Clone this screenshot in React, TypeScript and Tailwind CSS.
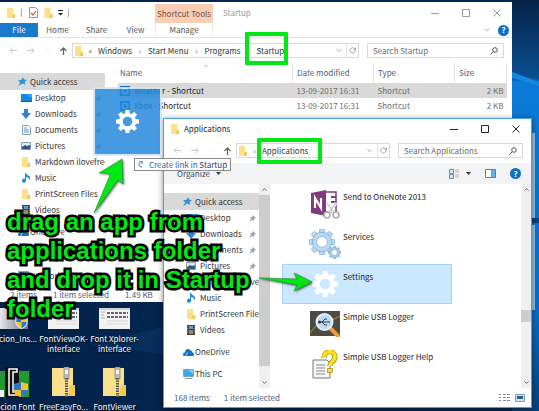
import { ReactNode } from "react";
import { FiChevronDown, FiChevronUp, FiRotateCw } from "react-icons/fi";

type NavEntry = { label: string; icon: ReactNode; pinned?: boolean; gap?: boolean };

const Folder = ({ className = "w-2 h-[10px]" }: { className?: string }) => (
  <svg className={`${className} shrink-0`} viewBox="0 0 8 10">
    <path d="M0 0h6v7h2v3H0z" fill="#ffe08a" />
    <path d="M6 6h2v4H5z" fill="#f3c651" />
  </svg>
);

const StarIcon = () => (
  <svg className="h-[9px] w-[9px] shrink-0" viewBox="0 0 9 9">
    <path d="M5 0l1 2.600 3 .4-2.400 2 .6 3-2.600-1.500L0 9l2.300-3.400L0 3.500l3.500-.7z" fill="#2b93dd" />
  </svg>
);

const Pin = () => (
  <svg className="h-[7px] w-[7px] shrink-0" viewBox="0 0 7 7">
    <path d="M4 0l3 3-1 .3-1.300 1.300-.1 1.700L3 5 0 7l2-3L.7 2.600l1.700-.2L3.700 1z" fill="#9ea6ad" />
  </svg>
);

const DesktopIcon = () => (
  <svg className="h-[9px] w-[11px]" viewBox="0 0 11 9">
    <path d="M0 0h11v7H0z" fill="#1687e0" />
    <path d="M0 7h11v1H0z" fill="#0b5ea8" />
    <path d="M5 0h6v4z" fill="#3aa5f2" />
  </svg>
);

const DownloadIcon = () => (
  <svg className="h-[10px] w-[10px]" viewBox="0 0 10 10">
    <path d="M3 0h4v4h3l-5 6-5-6h3z" fill="#2a86db" />
  </svg>
);

const DocumentIcon = () => (
  <svg className="h-[10px] w-[9px]" viewBox="0 0 9 10">
    <path d="M.5.5h6l2 2v7h-8z" fill="#fff" stroke="#8a9aa8" />
    <path d="M2 3h3M2 5h5M2 7h5" stroke="#4a97cf" />
  </svg>
);

const PictureIcon = () => (
  <svg className="h-2 w-[10px]" viewBox="0 0 10 8">
    <path d="M.5.5h9v7h-9z" fill="#dceaf5" stroke="#8b9aa6" />
    <path d="M1 5l3-2 2 1 3-1v4H1z" fill="#2d5a80" />
  </svg>
);

const MusicIcon = () => (
  <svg className="h-[10px] w-2" viewBox="0 0 8 10">
    <path d="M3 0h1c0 2 4 2 4 5 0 1-.5 2-1 2 0-2-1-3-3-3v4a2 2 0 1 1-1-2z" fill="#1c8be0" />
  </svg>
);

const VideoIcon = () => (
  <svg className="h-[10px] w-2" viewBox="0 0 8 10">
    <path d="M0 0h8v10H0z" fill="#3a3f48" />
    <path d="M2 1h4v3H2z" fill="#5a9fd6" />
    <path d="M2 5h4v4H2z" fill="#b07f4a" />
    <path d="M.7 1v8M7.300 1v8" stroke="#c8ccd2" strokeWidth=".7" strokeDasharray="1 1" />
  </svg>
);

const CloudIcon = () => (
  <svg className="h-[7px] w-[11px]" viewBox="0 0 11 7">
    <path d="M0 5.500C0 4 1 3.500 2 3.500 2 1.500 3.500 0 5 0s2 1 2.400 1.500C9 1.500 9.500 3 9.500 3.500 11 4 11 5 11 5.500 11 6.500 10.200 7 9.500 7H1.500C.5 7 0 6.300 0 5.500z" fill="#1273c5" />
    <path d="M3.500 7C2.500 5.500 3.500 4 5 4" stroke="#fff" strokeWidth=".7" fill="none" />
  </svg>
);

const ComputerIcon = () => (
  <svg className="h-[10px] w-[11px]" viewBox="0 0 11 10">
    <path d="M.5.5h10v7H.5z" fill="#36a9ea" stroke="#6fa6cc" />
    <path d="M5 1h5v4z" fill="#7fccf5" />
    <path d="M2 9h7v1H2z" fill="#8d9aa5" />
  </svg>
);

const quickLinks: NavEntry[] = [
  { label: "Desktop", icon: <DesktopIcon />, pinned: true },
  { label: "Downloads", icon: <DownloadIcon />, pinned: true },
  { label: "Documents", icon: <DocumentIcon />, pinned: true },
  { label: "Pictures", icon: <PictureIcon />, pinned: true },
  { label: "Markdown ilovefree", icon: <Folder /> },
  { label: "Music", icon: <MusicIcon /> },
  { label: "PrintScreen Files", icon: <Folder /> },
  { label: "Videos", icon: <VideoIcon /> },
];

const Gear = ({ className, fill = "#fff", stroke = "none" }: { className: string; fill?: string; stroke?: string }) => (
  <svg className={className} viewBox="-12 -12 24 24">
    <g fill={fill} stroke={stroke} strokeWidth=".6">
      {[0, 45, 90, 135, 180, 225, 270, 315].map((a) => (
        <path key={a} d="M-2.600-8l.6-4h4l.6 4z" transform={`rotate(${a})`} />
      ))}
      <path fillRule="evenodd" d="M0-9a9 9 0 1 0 0 18A9 9 0 0 0 0-9zM0-5a5 5 0 1 1 0 10A5 5 0 0 1 0-5z" />
    </g>
  </svg>
);

const Shield = ({ className }: { className: string }) => (
  <svg className={className} viewBox="0 0 14 16">
    <path d="M7 0l7 2v6c0 4-3 6.500-7 8-4-1.500-7-4-7-8V2z" fill="#e9eef2" />
    <path d="M7 1v7H1V3z" fill="#2f78c8" />
    <path d="M7 1v7h6V3z" fill="#f7c331" />
    <path d="M1 8h6v7C3 13.500 1 11 1 8z" fill="#f7c331" />
    <path d="M13 8H7v7c4-1.500 6-4 6-7z" fill="#2f78c8" />
  </svg>
);

const ZipFolder = () => (
  <svg className="h-[30px] w-[25px]" viewBox="0 0 25 30">
    <path d="M1 1h21v28H1z" fill="#fbe08c" />
    <path d="M19 18h5v11h-7z" fill="#f1c955" />
    <path d="M13 0h5v12h-5z" fill="#b9bcc0" stroke="#777" strokeWidth=".6" />
    <path d="M15.500 11v19" stroke="#555" strokeWidth="3" strokeDasharray="1.500 1" />
    <path d="M14 3h3v4h-3z" fill="#f3f3f3" />
  </svg>
);

const Screenshot = () => (
  <svg className="h-[21px] w-[31px]" viewBox="0 0 31 21">
    <path d="M0 0h31v21H0z" fill="#f2f2f2" />
    <path d="M0 0h31v2H0z" fill="#cfd3d8" />
    <path d="M2 4h4M2 7h3M2 10h4" stroke="#aaa" />
    <path d="M8 5h21M8 9h21" stroke="#666" strokeWidth="2" strokeDasharray="3 1" />
    <path d="M8 13h21M8 16h21" stroke="#d9d9d9" />
  </svg>
);

function HelpButton() {
  return (
    <button aria-label="Help" className="flex h-[11px] w-[11px] items-center justify-center rounded-full bg-[#0f6fc6] text-[8px] font-bold leading-none text-white">
      ?
    </button>
  );
}

function WindowControls({ color }: { color: string }) {
  return (
    <div className={`flex items-center gap-[23px] ${color}`}>
      <button aria-label="Minimize">
        <svg className="h-2 w-2" viewBox="0 0 8 8"><path d="M0 4.500h8" stroke="currentColor" /></svg>
      </button>
      <button aria-label="Maximize">
        <svg className="h-2 w-2" viewBox="0 0 8 8"><path d="M.5.5h7v7h-7z" fill="none" stroke="currentColor" /></svg>
      </button>
      <button aria-label="Close">
        <svg className="h-2 w-2" viewBox="0 0 8 8"><path d="M.5.5l7 7M7.500.5l-7 7" stroke="currentColor" /></svg>
      </button>
    </div>
  );
}

function HistoryButtons() {
  return (
    <div className="flex w-[63px] shrink-0 items-center justify-between text-[#c4c8cc]">
      <button aria-label="Back">
        <svg className="h-[7px] w-2" viewBox="0 0 8 7"><path d="M8 3.500H1M4 .5l-3 3 3 3" fill="none" stroke="currentColor" /></svg>
      </button>
      <button aria-label="Forward">
        <svg className="h-[7px] w-2" viewBox="0 0 8 7"><path d="M0 3.500h7M4 .5l3 3-3 3" fill="none" stroke="currentColor" /></svg>
      </button>
      <button aria-label="Recent locations"><FiChevronDown size={5} /></button>
      <button aria-label="Up" className="mr-[5px] text-[#5f666d]">
        <svg className="h-2 w-[7px]" viewBox="0 0 7 8"><path d="M3.500 8V1M.5 4l3-3 3 3" fill="none" stroke="currentColor" strokeWidth="1.300" /></svg>
      </button>
    </div>
  );
}

function AddressBar({ path, search, searchWidth, prefix }: { path: string[]; search: string; searchWidth: string; prefix: string }) {
  return (
    <div className="flex items-center gap-2 pl-[9px] pr-2">
      <div className="flex flex-1 items-center">
        <HistoryButtons />
        <div className="flex h-[15px] flex-1 items-center border border-[#d9d9d9] pl-[2px]">
          <Folder />
          <span className="w-[15px] text-center text-[#555]">{prefix}</span>
          <div className="flex flex-1 items-center">
            {path.map((part, i) => (
              <span key={part} className="flex">
                {i > 0 && <span className="w-4 text-center text-[#555]">›</span>}
                <a href="#">{part}</a>
              </span>
            ))}
          </div>
          <button aria-label="Previous locations" className="px-1 text-[#666]"><FiChevronDown size={7} /></button>
          <button aria-label="Refresh" className="flex h-full w-3 items-center justify-center border-l border-[#e3e3e3] text-[#666]"><FiRotateCw size={7} /></button>
        </div>
      </div>
      <div className={`flex h-[15px] ${searchWidth} items-center border border-[#d9d9d9] px-[5px]`}>
        <input aria-label={search} placeholder={search} className="min-w-0 flex-1 bg-transparent outline-none placeholder:text-[#6b6b6b]" />
        <svg className="h-2 w-2" viewBox="0 0 8 8">
          <circle cx="5" cy="3" r="2.300" fill="none" stroke="#555" />
          <path d="M3.300 4.700L.5 7.500" stroke="#555" />
        </svg>
      </div>
    </div>
  );
}

function NavPane({ entries, indent }: { entries: NavEntry[]; indent: string }) {
  return (
    <nav className="min-w-0 flex-1">
      <a href="#" className={`flex h-[17px] items-center gap-[3px] bg-[#d9d9d9] ${indent}`}>
        <StarIcon />
        Quick access
      </a>
      {entries.map(({ label, icon, pinned, gap }) => (
        <a
          key={label}
          href="#"
          className={`flex h-4 items-center ${indent} ${gap ? "mt-[6px]" : "gap-[3px]"}`}
        >
          <span className={`flex w-3 shrink-0 ${gap ? "" : "ml-[2px] justify-center"}`}>{icon}</span>
          <span className="flex-1 overflow-hidden whitespace-nowrap">{label}</span>
          {pinned && <span className="pr-[3px]"><Pin /></span>}
        </a>
      ))}
    </nav>
  );
}

function Scrollbar({ children, width }: { children: ReactNode; width: string }) {
  return (
    <div className={`flex ${width} shrink-0 flex-col items-center bg-[#f0f0f0] text-[#555]`}>
      <FiChevronUp size={7} className="my-[2px] shrink-0" strokeWidth={3} />
      <div className="flex w-full flex-1 flex-col">{children}</div>
      <FiChevronDown size={7} className="my-[2px] shrink-0" strokeWidth={3} />
    </div>
  );
}

const files = [
  { name: "Weather - Shortcut", selected: true },
  { name: "Xbox - Shortcut", selected: false },
];

function StartupWindow() {
  return (
    <section className="absolute left-0 right-[27px] top-[2px] bg-white">
      <header className="flex h-[21px] items-stretch">
        <div className="flex w-[155px] items-center pl-[7px]">
          <Folder />
          <span className="ml-[6px] h-2 w-px bg-[#aaa]" />
          <svg className="ml-[7px] h-[11px] w-[9px]" viewBox="0 0 9 11">
            <path d="M.5.5h6l2 2v8h-8z" fill="#fff" stroke="#999" />
            <path d="M2 6l2 2 3-4" fill="none" stroke="#d0572e" strokeWidth="1.200" />
          </svg>
          <Folder className="ml-[6px] h-[10px] w-[9px]" />
          <svg className="ml-[5px] h-[6px] w-[5px]" viewBox="0 0 5 6"><path d="M0 .5h5" stroke="#222" /><path d="M0 3h5L2.500 5.500z" fill="#222" /></svg>
          <span className="ml-[5px] h-2 w-px bg-[#aaa]" />
        </div>
        <div className="mt-[2px] flex w-[58px] items-center justify-center bg-[#fbcdb5] text-[#6b5145]">Shortcut Tools</div>
        <h1 className="flex flex-1 items-center pl-[10px] text-[#999]">Startup</h1>
        <div className="flex pr-[11px]"><WindowControls color="text-[#999]" /></div>
      </header>
      <div className="flex h-[15px] items-center border-b border-[#e3e3e3] text-[#555]">
        <button className="h-full w-[38px] bg-[#1979ca] text-white">File</button>
        <button className="h-full w-[39px]">Home</button>
        <button className="h-full w-[39px]">Share</button>
        <button className="h-full w-[39px]">View</button>
        <button className="h-full w-[58px] border-x border-[#eee]">Manage</button>
        <div className="flex flex-1 items-center justify-end gap-[7px] pr-[3px]">
          <FiChevronDown size={8} className="text-[#999]" />
          <HelpButton />
        </div>
      </div>
      <div className="py-[5px]">
        <AddressBar prefix="«" path={["Windows", "Start Menu", "Programs", "Startup"]} search="Search Startup" searchWidth="w-[137px]" />
      </div>
      <div className="flex min-h-[224px] pr-[5px]">
        <div className="flex w-[105px] shrink-0 pt-[10px]">
          <NavPane
            indent="pl-[18px]"
            entries={[
              ...quickLinks,
              { label: "OneDrive", icon: <CloudIcon />, gap: true },
              { label: "This PC", icon: <ComputerIcon />, gap: true },
              { label: "Network", icon: <ComputerIcon />, gap: true },
            ]}
          />
        </div>
        <div className="ml-[13px] flex-1">
          <table className="w-full table-fixed text-left text-[#6d6d6d]">
            <thead className="text-[#4c607a]">
              <tr className="h-5 align-top">
                <th className="border-r border-[#e5e5e5] pl-[2px] font-normal">
                  <FiChevronUp size={6} className="mx-auto -mb-[2px]" />
                  Name
                </th>
                <th className="w-[81px] border-r border-[#e5e5e5] pl-1 pt-1 font-normal">Date modified</th>
                <th className="w-[81px] border-r border-[#e5e5e5] pl-1 pt-1 font-normal">Type</th>
                <th className="w-[52px] border-r border-[#e5e5e5] pl-1 pt-1 font-normal">Size</th>
              </tr>
            </thead>
            <tbody>
              {files.map((file) => (
                <tr key={file.name} className={`h-[15px] ${file.selected ? "bg-[#d9d9d9]" : ""}`}>
                  <td className="text-[#222]">
                    <span className="flex items-center gap-1 pl-[2px]">
                      <span className="flex h-[10px] w-[10px] items-center justify-center bg-[#0a6fc2]"><Gear className="h-2 w-2" /></span>
                      {file.name}
                    </span>
                  </td>
                  <td className="pl-1">13-09-2017 16:31</td>
                  <td className="pl-1">Shortcut</td>
                  <td className="pr-[3px] text-right">2 KB</td>
                </tr>
              ))}
            </tbody>
          </table>
        </div>
      </div>
      <footer className="flex h-[15px] items-center gap-4 pl-[10px] text-[#4c607a]">
        <span>2 items</span>
        <span>1 item selected</span>
        <span>1.49 KB</span>
      </footer>
    </section>
  );
}

const OneNoteIcon = () => (
  <svg className="h-[30px] w-[30px]" viewBox="0 0 30 30">
    <path d="M14 3h12v20H14z" fill="#fff" stroke="#80397b" strokeWidth="1.500" />
    <path d="M21 8h5M21 13h5" stroke="#80397b" strokeWidth="2" />
    <path d="M1 4l15-3v26L1 24z" fill="#80397b" />
    <path d="M5 19V9l6 10V9" fill="none" stroke="#fff" strokeWidth="2.200" />
    <path d="M17 14l8 11M26 14l-8 11" stroke="#fff" strokeWidth="3" />
    <path d="M17 14l8 11M26 14l-8 11" stroke="#ccc" strokeWidth="1.500" />
    <circle cx="17" cy="26" r="3" fill="#fff" stroke="#aaa" strokeWidth="1.500" />
    <circle cx="26" cy="26" r="3" fill="#fff" stroke="#aaa" strokeWidth="1.500" />
  </svg>
);

const ServicesIcon = () => (
  <div className="flex h-[30px] w-8 items-start">
    <Gear className="h-[26px] w-[26px] shrink-0" fill="#b9daf2" stroke="#7ba6c8" />
    <Gear className="-ml-[7px] h-[13px] w-[13px] shrink-0 self-end" fill="#a5cdea" stroke="#6c9abf" />
  </div>
);

const LoggerIcon = () => (
  <svg className="h-[26px] w-[30px]" viewBox="0 0 30 26">
    <path d="M0 0h30v25H0z" fill="#4b4b46" />
    <path d="M0 22l7-8 5 5 8-9 10-5" stroke="#b99a35" fill="none" />
    <path d="M21 18l7 7" stroke="#f29a3c" strokeWidth="4" strokeLinecap="round" />
    <circle cx="14.500" cy="11" r="8" fill="#b9dcf7" stroke="#e9eef2" strokeWidth="2" />
    <path d="M9 11h11M12 11l3-3h2M12 11l3 3h2" stroke="#333" fill="none" />
    <circle cx="9.500" cy="11" r="1.500" fill="#333" />
  </svg>
);

const HelpFileIcon = () => (
  <svg className="h-[29px] w-[26px]" viewBox="0 0 26 29">
    <path d="M1 10h14l3 3v15H1z" fill="#f6f6f6" stroke="#777" />
    <path d="M4 15h9M4 18h9M4 21h9M4 24h9" stroke="#888" />
    <path d="M12 8c0-8 11-8 11-1 0 5-5 4-5 9" stroke="#8b7400" strokeWidth="5" fill="none" />
    <path d="M12 8c0-8 11-8 11-1 0 5-5 4-5 9" stroke="#ffe019" strokeWidth="4" fill="none" />
    <path d="M15.500 18.500h5v4h-5z" fill="#ffe019" stroke="#8b7400" strokeWidth=".6" />
  </svg>
);

const apps = [
  { name: "Send to OneNote 2013", icon: <OneNoteIcon /> },
  { name: "Services", icon: <ServicesIcon /> },
  { name: "Settings", icon: <Gear className="h-[26px] w-[26px]" />, selected: true },
  { name: "Simple USB Logger", icon: <LoggerIcon /> },
  { name: "Simple USB Logger Help", icon: <HelpFileIcon /> },
];

function ApplicationsWindow() {
  return (
    <section className="absolute left-[163px] right-[7px] top-[118px] border border-[#4c9fdc] bg-white shadow-[0_1px_6px_rgba(0,0,0,0.45)]">
      <header className="flex h-[19px] items-center pl-[7px] pr-[11px]">
        <Folder />
        <h2 className="flex-1 pl-[5px] text-[#222]">Applications</h2>
        <WindowControls color="text-[#222]" />
      </header>
      <div className="py-[5px]">
        <AddressBar prefix="›" path={["Applications"]} search="Search Applications" searchWidth="w-[125px]" />
      </div>
      <div className="flex h-[21px] items-center bg-[#f2f3f4] pl-[13px] pr-[10px] text-[#3d4b66]">
        <button className="flex flex-1 items-center gap-[6px]">
          Organize
          <svg className="h-[3px] w-[5px]" viewBox="0 0 5 3"><path d="M0 0h5L2.500 3z" fill="#2b3a5c" /></svg>
        </button>
        <button aria-label="Change view" className="flex items-center gap-[7px]">
          <svg className="h-[10px] w-[10px]" viewBox="0 0 10 10">
            <path d="M.5.5h4v4h-4zM.5 5.500h4v4h-4z" fill="#cde4f7" stroke="#6a8fb0" />
            <path d="M6 1h4M6 3h4M6 6h4M6 8h4" stroke="#999" strokeWidth=".7" />
          </svg>
          <svg className="h-[3px] w-[5px]" viewBox="0 0 5 3"><path d="M0 0h5L2.500 3z" fill="#2b3a5c" /></svg>
        </button>
        <button aria-label="Preview pane" className="mx-[14px]">
          <svg className="h-[9px] w-[11px]" viewBox="0 0 11 9">
            <path d="M.5.5h10v8H.5z" fill="#fff" stroke="#777" />
            <path d="M6 1h4v7H6z" fill="#5cb1f0" />
          </svg>
        </button>
        <HelpButton />
      </div>
      <div className="flex h-[204px]">
        <div className="flex w-[95px] shrink-0 pt-[9px]">
          <NavPane
            indent="pl-[19px]"
            entries={[
              ...quickLinks,
              { label: "OneDrive", icon: <CloudIcon />, gap: true },
              { label: "This PC", icon: <ComputerIcon />, gap: true },
            ]}
          />
        </div>
        <Scrollbar width="w-[11px]">
          <div className="h-[171px] bg-[#cdcdcd]" />
        </Scrollbar>
        <ul className="flex-1 pl-3">
          {apps.map((app) => (
            <li
              key={app.name}
              className={`flex h-10 max-w-[170px] border pl-[26px] ${app.selected ? "border-[#a5d3f7] bg-[#cce8ff]" : "border-transparent"}`}
            >
              <div className="flex w-8 items-center justify-center">{app.icon}</div>
              <span className="whitespace-nowrap pl-[2px] pt-[6px] text-[#222]">{app.name}</span>
            </li>
          ))}
        </ul>
        <Scrollbar width="w-[10px]">
          <div className="mt-[115px] h-3 bg-[#cdcdcd]" />
        </Scrollbar>
      </div>
      <footer className="flex h-[19px] items-center pl-[10px] pr-[6px] text-[#4c607a]">
        <span>168 items</span>
        <span className="flex-1 pl-[14px]">1 item selected</span>
        <button aria-label="Details view">
          <svg className="h-[9px] w-[11px]" viewBox="0 0 11 9"><path d="M0 1.500h2M4 1.500h3M8 1.500h3M0 4.500h2M4 4.500h3M8 4.500h3M0 7.500h2M4 7.500h3M8 7.500h3" stroke="#888" /></svg>
        </button>
        <button aria-label="Large icons view" className="ml-[5px]">
          <svg className="h-2 w-[10px]" viewBox="0 0 10 8">
            <path d="M.5.5h9v7h-9z" fill="#cfe6f8" stroke="#7a9ab5" />
            <path d="M2 2h6v3H2z" fill="#2c5f88" />
          </svg>
        </button>
      </footer>
    </section>
  );
}

const desktopIcons = [
  {
    label: "Opcion_Ins...",
    icon: (
      <div className="flex h-[21px] w-[31px] items-end justify-end bg-gradient-to-r from-gray-100 to-gray-500">
        <Shield className="h-[14px] w-[13px]" />
      </div>
    ),
  },
  { label: "FontViewOK-interface", icon: <Screenshot /> },
  { label: "Font Xplorer-interface", icon: <Screenshot /> },
  {
    label: "Opcion Font",
    icon: (
      <svg className="h-[30px] w-8" viewBox="0 0 32 30">
        <path d="M0 4h32v26H0z" fill="#1f9a33" />
        <path d="M8 0h14v30H8z" fill="#111" />
        <path d="M20 2h-8v26h8v-3h-4V5h4z" fill="none" stroke="#fff" strokeWidth="1.500" />
        <path d="M0 23h7v7H0z" fill="#e7eff7" />
        <g transform="translate(17 15)">
          <path d="M7 0l7 2v6c0 4-3 6-7 7-4-1-7-3-7-7V2z" fill="#2f78c8" />
          <path d="M7 0l7 2v6H7zM7 8v7c-4-1-7-3-7-7z" fill="#f7c331" />
        </g>
      </svg>
    ),
  },
  { label: "FreeEasyFo...", icon: <ZipFolder /> },
  { label: "FontViewer", icon: <ZipFolder /> },
];

function DesktopIcons() {
  return (
    <ul className="absolute -left-[13px] top-[308px] grid grid-cols-[51px_51px_51px] gap-y-[13px] text-center leading-[10px] text-white [text-shadow:0_1px_2px_#000]">
      {desktopIcons.map(({ label, icon }) => (
        <li key={label} className="flex flex-col items-center gap-[5px]">
          {icon}
          <span className="w-[50px]">{label}</span>
        </li>
      ))}
    </ul>
  );
}

function DragPreview() {
  return (
    <>
      <div className="absolute left-[93px] top-[87px] flex h-[69px] w-[69px] items-center justify-center border-2 border-[#cfe6f8]/90 bg-[#2488dc]/85 bg-clip-padding">
        <Gear className="h-[23px] w-[23px]" />
      </div>
      <div role="tooltip" className="absolute left-[134px] top-[158px] flex h-[13px] items-center gap-[6px] whitespace-nowrap border border-[#8a8a8a] bg-white px-[3px] text-[#2e62b0]">
        <svg className="h-[7px] w-[5px]" viewBox="0 0 5 7"><path d="M1 0h3v3M4 0C0 2 0 6 4 6" fill="none" stroke="#2e76c8" /></svg>
        <span>Create link in <span className="text-[#1c3b77]">Startup</span></span>
      </div>
    </>
  );
}

function Annotations() {
  return (
    <>
      <div className="absolute left-[245px] top-[32px] h-[33px] w-[43px] rounded-[1px] border-4 border-[#00e813]" />
      <div className="absolute left-[257px] top-[138px] h-[26px] w-[65px] rounded-[1px] border-4 border-[#00e813]" />
      <svg className="absolute left-[90px] top-[155px] h-[60px] w-[36px] drop-shadow-[1px_1px_1px_rgba(0,0,0,0.6)]" viewBox="0 0 36 60">
        <path d="M4 58L20 20l-3-2-8 0L32 4l1 25-5-4z" fill="#00e813" stroke="#1f7a28" strokeWidth=".5" />
      </svg>
      <svg className="absolute left-[256px] top-[268px] h-[26px] w-[58px] drop-shadow-[1px_1px_1px_rgba(0,0,0,0.6)]" viewBox="0 0 58 26">
        <path d="M3 10l38 1-3-6 18 9-18 9 3-6z" fill="#00e813" stroke="#1f7a28" strokeWidth=".5" />
      </svg>
      <p className="absolute left-[7px] top-[207px] w-[256px] text-[24px] font-bold leading-[29px] text-[#00e813] [-webkit-text-stroke:5px_#000] [paint-order:stroke_fill]">
        drag an app from applications folder and drop it in Startup folder
      </p>
    </>
  );
}

function Wallpaper() {
  return (
    <svg className="absolute inset-0 h-full w-full" viewBox="0 0 539 411" preserveAspectRatio="none" aria-hidden="true">
      <defs>
        <linearGradient id="night" x1="0" y1="0" x2="1" y2="0">
          <stop offset="0" stopColor="#03224a" />
          <stop offset="1" stopColor="#052a55" />
        </linearGradient>
        <linearGradient id="beam" x1="0" y1="0" x2="0" y2="1">
          <stop offset="0" stopColor="#052347" />
          <stop offset=".19" stopColor="#0a4f92" />
          <stop offset=".2" stopColor="#0b7ad8" />
          <stop offset=".75" stopColor="#0a6cc6" />
          <stop offset="1" stopColor="#064079" />
        </linearGradient>
      </defs>
      <path d="M0 0h539v411H0z" fill="url(#night)" />
      <path d="M90 345l80-20v30z" fill="#0a3566" opacity=".6" />
      <path d="M512 0h27v411h-27z" fill="url(#beam)" />
      <path d="M512 78l27 8v-4l-27-10z" fill="#1287e4" />
      <path d="M531 133h4v85h-4zM531 225h4v85h-4z" fill="#8fc4e8" />
      <path d="M529 218h10v5h-10z" fill="#07407c" />
    </svg>
  );
}

export default function App() {
  return (
    <main className="relative min-h-screen overflow-hidden bg-[#04264f] font-['Noto_Sans_CJK_SC','Noto_Sans',sans-serif] text-[8px] leading-[12px] text-[#333]">
      <Wallpaper />
      <DesktopIcons />
      <StartupWindow />
      <ApplicationsWindow />
      <DragPreview />
      <div className="font-['Liberation_Sans',Arial,sans-serif]">
        <Annotations />
      </div>
    </main>
  );
}
